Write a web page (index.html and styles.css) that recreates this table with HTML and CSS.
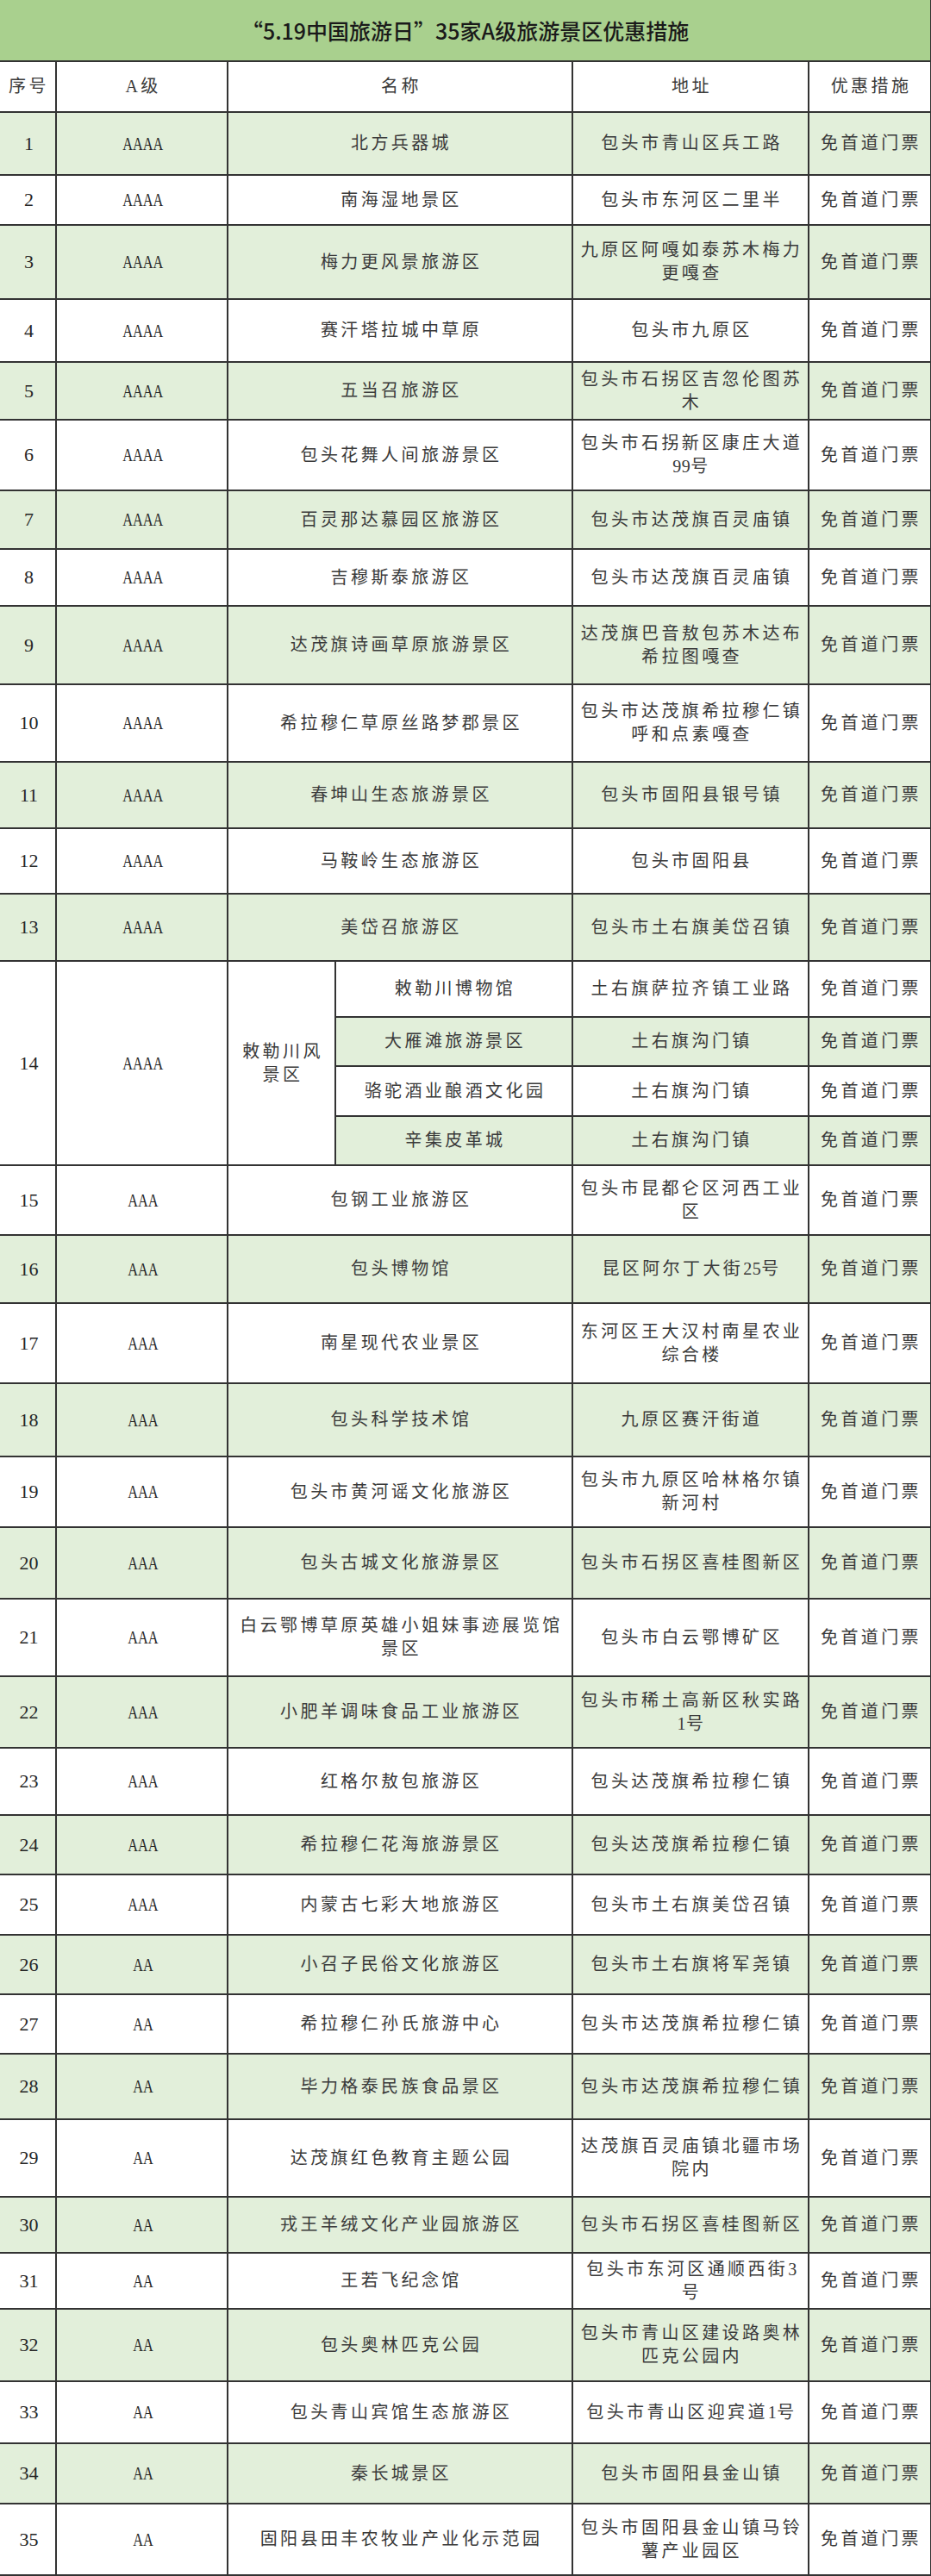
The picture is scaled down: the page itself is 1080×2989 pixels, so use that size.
FILE: index.html
```html
<!DOCTYPE html>
<html lang="zh-CN">
<head>
<meta charset="utf-8">
<title>“5.19中国旅游日”35家A级旅游景区优惠措施</title>
<link rel="stylesheet" href="styles.css">
</head>
<body>
<table class="sheet">
  <colgroup>
    <col class="w-no"><col class="w-lv"><col class="w-sub"><col class="w-name"><col class="w-addr"><col class="w-offer">
  </colgroup>
  <tbody>
    <tr class="h71"><td colspan="6" class="title">“5.19中国旅游日”35家A级旅游景区优惠措施</td></tr>
    <tr class="h59"><td class="zh">序号</td><td class="zh">A级</td><td colspan="2" class="zh">名称</td><td class="zh">地址</td><td class="zh">优惠措施</td></tr>

    <tr class="h73 g"><td class="num">1</td><td><span class="lv">AAAA</span></td><td colspan="2" class="zh">北方兵器城</td><td class="zh">包头市青山区兵工路</td><td class="zh">免首道门票</td></tr>
    <tr class="h58"><td class="num">2</td><td><span class="lv">AAAA</span></td><td colspan="2" class="zh">南海湿地景区</td><td class="zh">包头市东河区二里半</td><td class="zh">免首道门票</td></tr>
    <tr class="h86 g"><td class="num">3</td><td><span class="lv">AAAA</span></td><td colspan="2" class="zh">梅力更风景旅游区</td><td class="zh">九原区阿嘎如泰苏木梅力更嘎查</td><td class="zh">免首道门票</td></tr>
    <tr class="h73"><td class="num">4</td><td><span class="lv">AAAA</span></td><td colspan="2" class="zh">赛汗塔拉城中草原</td><td class="zh">包头市九原区</td><td class="zh">免首道门票</td></tr>
    <tr class="h67 g"><td class="num">5</td><td><span class="lv">AAAA</span></td><td colspan="2" class="zh">五当召旅游区</td><td class="zh">包头市石拐区吉忽伦图苏木</td><td class="zh">免首道门票</td></tr>
    <tr class="h82"><td class="num">6</td><td><span class="lv">AAAA</span></td><td colspan="2" class="zh">包头花舞人间旅游景区</td><td class="zh">包头市石拐新区康庄大道<span class="d">99</span>号</td><td class="zh">免首道门票</td></tr>
    <tr class="h68 g"><td class="num">7</td><td><span class="lv">AAAA</span></td><td colspan="2" class="zh">百灵那达慕园区旅游区</td><td class="zh">包头市达茂旗百灵庙镇</td><td class="zh">免首道门票</td></tr>
    <tr class="h66"><td class="num">8</td><td><span class="lv">AAAA</span></td><td colspan="2" class="zh">吉穆斯泰旅游区</td><td class="zh">包头市达茂旗百灵庙镇</td><td class="zh">免首道门票</td></tr>
    <tr class="h91 g"><td class="num">9</td><td><span class="lv">AAAA</span></td><td colspan="2" class="zh">达茂旗诗画草原旅游景区</td><td class="zh">达茂旗巴音敖包苏木达布希拉图嘎查</td><td class="zh">免首道门票</td></tr>
    <tr class="h90"><td class="num">10</td><td><span class="lv">AAAA</span></td><td colspan="2" class="zh">希拉穆仁草原丝路梦郡景区</td><td class="zh">包头市达茂旗希拉穆仁镇呼和点素嘎查</td><td class="zh">免首道门票</td></tr>
    <tr class="h77 g"><td class="num">11</td><td><span class="lv">AAAA</span></td><td colspan="2" class="zh">春坤山生态旅游景区</td><td class="zh">包头市固阳县银号镇</td><td class="zh">免首道门票</td></tr>
    <tr class="h76"><td class="num">12</td><td><span class="lv">AAAA</span></td><td colspan="2" class="zh">马鞍岭生态旅游区</td><td class="zh">包头市固阳县</td><td class="zh">免首道门票</td></tr>
    <tr class="h78 g"><td class="num">13</td><td><span class="lv">AAAA</span></td><td colspan="2" class="zh">美岱召旅游区</td><td class="zh">包头市土右旗美岱召镇</td><td class="zh">免首道门票</td></tr>

    <tr class="h65"><td rowspan="4" class="num">14</td><td rowspan="4"><span class="lv">AAAA</span></td><td rowspan="4" class="zh">敕勒川风景区</td><td class="zh">敕勒川博物馆</td><td class="zh">土右旗萨拉齐镇工业路</td><td class="zh">免首道门票</td></tr>
    <tr class="h57 g"><td class="zh">大雁滩旅游景区</td><td class="zh">土右旗沟门镇</td><td class="zh">免首道门票</td></tr>
    <tr class="h58"><td class="zh">骆驼酒业酿酒文化园</td><td class="zh">土右旗沟门镇</td><td class="zh">免首道门票</td></tr>
    <tr class="h57 g"><td class="zh">辛集皮革城</td><td class="zh">土右旗沟门镇</td><td class="zh">免首道门票</td></tr>

    <tr class="h81"><td class="num">15</td><td><span class="lv">AAA</span></td><td colspan="2" class="zh">包钢工业旅游区</td><td class="zh">包头市昆都仑区河西工业区</td><td class="zh">免首道门票</td></tr>
    <tr class="h79 g"><td class="num">16</td><td><span class="lv">AAA</span></td><td colspan="2" class="zh">包头博物馆</td><td class="zh">昆区阿尔丁大街<span class="d">25</span>号</td><td class="zh">免首道门票</td></tr>
    <tr class="h93"><td class="num">17</td><td><span class="lv">AAA</span></td><td colspan="2" class="zh">南星现代农业景区</td><td class="zh">东河区王大汉村南星农业综合楼</td><td class="zh">免首道门票</td></tr>
    <tr class="h85 g"><td class="num">18</td><td><span class="lv">AAA</span></td><td colspan="2" class="zh">包头科学技术馆</td><td class="zh">九原区赛汗街道</td><td class="zh">免首道门票</td></tr>
    <tr class="h82"><td class="num">19</td><td><span class="lv">AAA</span></td><td colspan="2" class="zh">包头市黄河谣文化旅游区</td><td class="zh">包头市九原区哈林格尔镇新河村</td><td class="zh">免首道门票</td></tr>
    <tr class="h83 g"><td class="num">20</td><td><span class="lv">AAA</span></td><td colspan="2" class="zh">包头古城文化旅游景区</td><td class="zh">包头市石拐区喜桂图新区</td><td class="zh">免首道门票</td></tr>
    <tr class="h90"><td class="num">21</td><td><span class="lv">AAA</span></td><td colspan="2" class="zh">白云鄂博草原英雄小姐妹事迹展览馆景区</td><td class="zh">包头市白云鄂博矿区</td><td class="zh">免首道门票</td></tr>
    <tr class="h83 g"><td class="num">22</td><td><span class="lv">AAA</span></td><td colspan="2" class="zh">小肥羊调味食品工业旅游区</td><td class="zh">包头市稀土高新区秋实路<span class="d">1</span>号</td><td class="zh">免首道门票</td></tr>
    <tr class="h78"><td class="num">23</td><td><span class="lv">AAA</span></td><td colspan="2" class="zh">红格尔敖包旅游区</td><td class="zh">包头达茂旗希拉穆仁镇</td><td class="zh">免首道门票</td></tr>
    <tr class="h69 g"><td class="num">24</td><td><span class="lv">AAA</span></td><td colspan="2" class="zh">希拉穆仁花海旅游景区</td><td class="zh">包头达茂旗希拉穆仁镇</td><td class="zh">免首道门票</td></tr>
    <tr class="h70"><td class="num">25</td><td><span class="lv">AAA</span></td><td colspan="2" class="zh">内蒙古七彩大地旅游区</td><td class="zh">包头市土右旗美岱召镇</td><td class="zh">免首道门票</td></tr>
    <tr class="h69 g"><td class="num">26</td><td><span class="lv">AA</span></td><td colspan="2" class="zh">小召子民俗文化旅游区</td><td class="zh">包头市土右旗将军尧镇</td><td class="zh">免首道门票</td></tr>
    <tr class="h69"><td class="num">27</td><td><span class="lv">AA</span></td><td colspan="2" class="zh">希拉穆仁孙氏旅游中心</td><td class="zh">包头市达茂旗希拉穆仁镇</td><td class="zh">免首道门票</td></tr>
    <tr class="h76 g"><td class="num">28</td><td><span class="lv">AA</span></td><td colspan="2" class="zh">毕力格泰民族食品景区</td><td class="zh">包头市达茂旗希拉穆仁镇</td><td class="zh">免首道门票</td></tr>
    <tr class="h90"><td class="num">29</td><td><span class="lv">AA</span></td><td colspan="2" class="zh">达茂旗红色教育主题公园</td><td class="zh">达茂旗百灵庙镇北疆市场院内</td><td class="zh">免首道门票</td></tr>
    <tr class="h65 g"><td class="num">30</td><td><span class="lv">AA</span></td><td colspan="2" class="zh">戎王羊绒文化产业园旅游区</td><td class="zh">包头市石拐区喜桂图新区</td><td class="zh">免首道门票</td></tr>
    <tr class="h65"><td class="num">31</td><td><span class="lv">AA</span></td><td colspan="2" class="zh">王若飞纪念馆</td><td class="zh">包头市东河区通顺西街<span class="d">3</span>号</td><td class="zh">免首道门票</td></tr>
    <tr class="h84 g"><td class="num">32</td><td><span class="lv">AA</span></td><td colspan="2" class="zh">包头奥林匹克公园</td><td class="zh">包头市青山区建设路奥林匹克公园内</td><td class="zh">免首道门票</td></tr>
    <tr class="h72"><td class="num">33</td><td><span class="lv">AA</span></td><td colspan="2" class="zh">包头青山宾馆生态旅游区</td><td class="zh">包头市青山区迎宾道<span class="d">1</span>号</td><td class="zh">免首道门票</td></tr>
    <tr class="h70 g"><td class="num">34</td><td><span class="lv">AA</span></td><td colspan="2" class="zh">秦长城景区</td><td class="zh">包头市固阳县金山镇</td><td class="zh">免首道门票</td></tr>
    <tr class="h83"><td class="num">35</td><td><span class="lv">AA</span></td><td colspan="2" class="zh">固阳县田丰农牧业产业化示范园</td><td class="zh">包头市固阳县金山镇马铃薯产业园区</td><td class="zh">免首道门票</td></tr>
  </tbody>
</table>
</body>
</html>
```

FILE: styles.css
```css
html, body {
  margin: 0;
  padding: 0;
  background: #ffffff;
}

.sheet {
  width: 1080px;
  table-layout: fixed;
  border-collapse: collapse;
  border-top: 2px hidden;
  border-left: 2px hidden;
  font-family: "Liberation Serif", "Noto Sans CJK SC", serif;
  color: #333333;
}

.w-no { width: 65px; }
.w-lv { width: 199px; }
.w-sub { width: 125px; }
.w-name { width: 275px; }
.w-addr { width: 274px; }
.w-offer { width: 142px; }

.sheet td {
  border: 2px solid #333333;
  padding: 0 3px 0 6px;
  text-align: center;
  vertical-align: middle;
  background: #ffffff;
  overflow: hidden;
}

.sheet tr.g td { background: #e2efda; }

.sheet td.title {
  background: #a9d08e;
  font-family: "Noto Sans CJK SC", sans-serif;
  font-size: 25px;
  font-weight: 500;
  color: #1a1a1a;
  padding: 0;
  letter-spacing: 0;
}

.zh {
  font-size: 20px;
  letter-spacing: 3.4px;
  line-height: 27px;
  color: #3a3a3a;
}

.zh .d {
  letter-spacing: 0.5px;
}

.num {
  font-size: 22px;
  color: #262626;
}

.lv {
  display: inline-block;
  font-size: 22px;
  color: #262626;
  transform: scaleX(0.74);
}

.h57 { height: 57px; }
.h58 { height: 58px; }
.h59 { height: 59px; }
.h65 { height: 65px; }
.h66 { height: 66px; }
.h67 { height: 67px; }
.h68 { height: 68px; }
.h69 { height: 69px; }
.h70 { height: 70px; }
.h71 { height: 71px; }
.h72 { height: 72px; }
.h73 { height: 73px; }
.h76 { height: 76px; }
.h77 { height: 77px; }
.h78 { height: 78px; }
.h79 { height: 79px; }
.h81 { height: 81px; }
.h82 { height: 82px; }
.h83 { height: 83px; }
.h84 { height: 84px; }
.h85 { height: 85px; }
.h86 { height: 86px; }
.h90 { height: 90px; }
.h91 { height: 91px; }
.h93 { height: 93px; }
```
